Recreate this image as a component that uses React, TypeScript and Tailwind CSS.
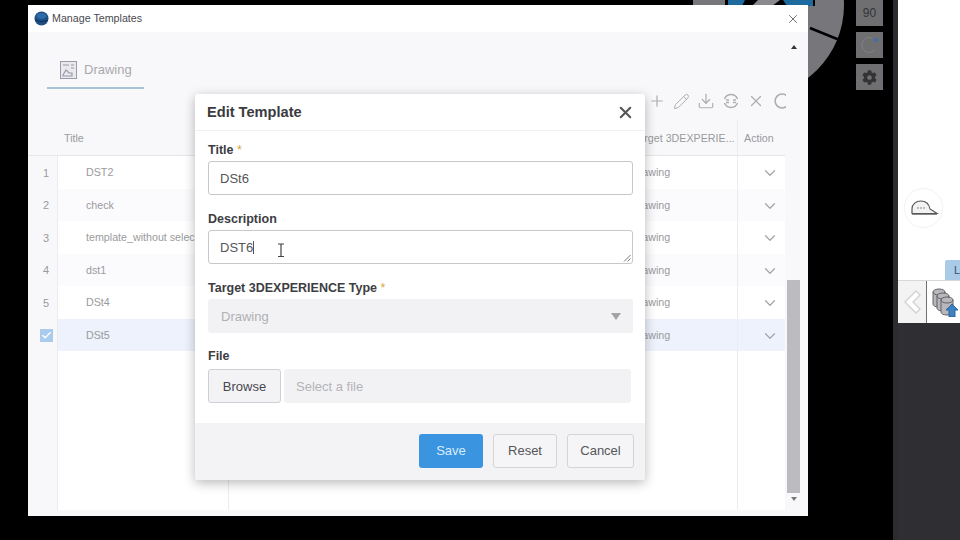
import { ChevronDown, Check, Plus, Pencil, Download, X } from "lucide-react";
import { FaCog } from "react-icons/fa";

const ROWS = ["DST2", "check", "template_without selection", "dst1", "DSt4", "DSt5"];

const Wheel = () => (
  <svg className="absolute left-[690px] top-0" width="170" height="100" viewBox="690 0 170 100">
    <circle cx="752" cy="5" r="92" fill="#77777b" />
    <path d="M690 0h3v8h-3z" fill="#000" />
    <path d="M725 0h90v6h-90z" fill="#000" />
    <path d="M728 0h17l-3 6h-14z" fill="#1d6a9e" />
    <path d="M758 0h22l-8 6h-20z" fill="#8a8a8e" />
    <path d="M783 0h30v6h-26z" fill="#1d6a9e" />
    <path d="M808 6h8v3h-8z" fill="#77777b" />
    <path d="M810 28L842 41" stroke="#000" strokeWidth="2.5" />
  </svg>
);

const SideButton = ({ children }: { children: React.ReactNode }) => (
  <div className="w-[27px] h-[26px] bg-[#6f6f71] flex items-center justify-center text-[#333335] text-[12px]">
    {children}
  </div>
);

const Toolbar = () => (
  <div className="absolute right-[1px] top-[-13px] w-[138px] h-[26px] flex items-center gap-[7px] overflow-hidden text-[#aeaeb2]">
    <Plus size={18} strokeWidth={1.6} className="flex-none" />
    <Pencil size={17} strokeWidth={1.4} className="flex-none" />
    <Download size={18} strokeWidth={1.6} className="flex-none" />
    <svg width="18" height="18" viewBox="0 0 18 18" fill="none" stroke="currentColor" strokeWidth="1.5" className="flex-none">
      <path d="M2.5 7a7 7 0 0 1 13 0M15.5 11a7 7 0 0 1-13 0" />
      <path d="M4 8h3M11 8h3M4 10.5h3M11 10.5h3" />
    </svg>
    <X size={18} strokeWidth={1.6} className="flex-none" />
    <svg width="18" height="18" viewBox="0 0 18 18" fill="none" stroke="currentColor" strokeWidth="1.6" className="flex-none">
      <path d="M15 4a7 7 0 1 0 0 10" />
    </svg>
  </div>
);

const Grid = () => (
  <div className="flex-1 flex flex-col min-h-0 mr-[2px] text-[10.7px] text-[#9a9a9d]">
    <div className="flex h-[36px] items-center border-b border-[#e6e6ea]">
      <div className="w-[29px]" />
      <div className="w-[172px] pl-[7px] pt-[2px] h-full flex items-center">Title</div>
      <div className="flex-1" />
      <div className="w-[112px] pl-[8px] pt-[2px] whitespace-nowrap h-full flex items-center">Target 3DEXPERIE...</div>
      <div className="w-[48px] pl-[6px] pt-[2px] h-full flex items-center border-l border-[#ececf0]">Action</div>
    </div>
    <div className="relative flex-1 flex flex-col">
      {ROWS.map((title, i) => (
        <div key={title} className={`flex h-[32.5px] flex-none ${i === 5 ? "bg-[#edf2fc]" : i % 2 === 1 ? "bg-[#fbfbfd]" : "bg-white"}`}>
          <div className="w-[29px] bg-[#f8f8fa] flex items-center justify-center pl-[7px] pt-[1px] text-[11px]">
            {i === 5 ? (
              <span className="w-[13px] h-[13px] bg-[#a9cbee] flex items-center justify-center text-white">
                <Check size={11} strokeWidth={3} />
              </span>
            ) : (
              i + 1
            )}
          </div>
          <div className="w-[172px] pl-[28px] flex items-center whitespace-nowrap overflow-hidden border-l border-[#ececf0]">{title}</div>
          <div className="flex-1" />
          <div className="w-[112px] flex items-center pl-[6px]">Drawing</div>
          <div className="w-[48px] flex items-center justify-center pt-[2px] border-l border-[#ececf0] text-[#a4a4a8]">
            <ChevronDown size={18} strokeWidth={1.6} className="ml-[17px]" />
          </div>
        </div>
      ))}
      <div className="flex-1 flex bg-white">
        <div className="w-[29px] bg-[#f8f8fa]" />
        <div className="w-[172px] border-l border-r border-[#ececf0]" />
        <div className="flex-1" />
        <div className="w-[48px] border-l border-[#ececf0]" />
      </div>
    </div>
  </div>
);

const Scrollbar = () => (
  <div className="w-[13px] mr-[8px] flex flex-col items-center">
    <div className="h-[22px] flex items-center justify-center pt-[7px]">
      <span className="w-0 h-0 border-x-[3.5px] border-x-transparent border-b-[4px] border-b-[#333]" />
    </div>
    <div className="flex-1" />
    <div className="w-full h-[213px] bg-[#bcbcc0]" />
    <div className="h-[23px] flex justify-center pt-[4px]">
      <span className="w-0 h-0 border-x-[3.5px] border-x-transparent border-t-[4px] border-t-[#77777b]" />
    </div>
  </div>
);

const inputCls = "w-full h-[34px] rounded-[3px] border border-[#c8c8cc] bg-white px-[11px] pt-[1px] flex items-center text-[13px] text-[#55555a]";

const Label = ({ text, req }: { text: string; req?: boolean }) => (
  <div className="h-[22px] leading-[22px] font-bold text-[12.5px] text-[#3d3d42]">
    {text}
    {req && <span className="text-[#d9a441] font-normal"> *</span>}
  </div>
);

const EditDialog = () => (
  <div className="absolute left-[195px] top-[94px] w-[450px] h-[386px] bg-white rounded-[3px] shadow-[0_3px_12px_rgba(0,0,0,0.28)] flex flex-col">
    <div className="h-[37px] flex-none border-b border-[#f0f0f3] pl-[12px] pr-[10px] flex items-center justify-between">
      <span className="font-bold text-[14.6px] text-[#3a3a3f] mt-[1px]">Edit Template</span>
      <X size={19} strokeWidth={2.6} className="text-[#55555a]" />
    </div>
    <div className="flex-1 pl-[13px] pr-[12px] pt-[8px]">
      <Label text="Title" req />
      <div className={inputCls}>DSt6</div>
      <div className="mt-[13px]"><Label text="Description" /></div>
      <div className={`${inputCls} relative border-[#b4b4b8]`}>
        DST6
        <span className="w-px h-[13px] bg-[#55555a]" />
        {/* mouse cursor */}
        <svg className="absolute left-[67px] top-[12px]" width="10" height="15" viewBox="0 0 10 15" fill="none" stroke="#444" strokeWidth="1.2">
          <path d="M2 1h6M2 13.5h6M5 1v12.5" />
        </svg>
        <svg className="absolute right-[1px] bottom-[1px]" width="8" height="8" viewBox="0 0 8 8" stroke="#77777b" strokeWidth="1">
          <path d="M1 7.5L7.5 1M4.5 7.5L7.5 4.5" />
        </svg>
      </div>
      <div className="mt-[13px]"><Label text="Target 3DEXPERIENCE Type" req /></div>
      <div className="w-full h-[34px] rounded-[3px] bg-[#f2f2f4] pl-[13px] pr-[12px] pt-[1px] flex items-center justify-between text-[13px] text-[#b0b0b4]">
        Drawing
        <span className="w-0 h-0 border-x-[5.5px] border-x-transparent border-t-[7px] border-t-[#a3a3a7]" />
      </div>
      <div className="mt-[12px]"><Label text="File" /></div>
      <div className="flex gap-[3px] pr-[2px] mt-[2px]">
        <div className="w-[73px] h-[34px] rounded-[3px] border border-[#d0d0d4] bg-[#f3f3f5] pt-[1px] flex items-center justify-center text-[13px] text-[#48484d]">Browse</div>
        <div className="flex-1 h-[34px] rounded-[3px] bg-[#f2f2f4] pl-[12px] pt-[1px] flex items-center text-[13px] text-[#b4b4b8]">Select a file</div>
      </div>
    </div>
    <div className="h-[57px] flex-none bg-[#f3f3f5] rounded-b-[3px] flex items-center justify-end gap-[10px] pr-[11px] pb-[2px] text-[13px]">
      <div className="w-[64px] h-[34px] rounded-[3px] bg-[#3a94e0] text-[#d8ecfb] flex items-center justify-center">Save</div>
      <div className="w-[64px] h-[34px] rounded-[3px] border border-[#d4d4d8] bg-[#f5f5f7] text-[#55555a] flex items-center justify-center">Reset</div>
      <div className="w-[67px] h-[34px] rounded-[3px] border border-[#d4d4d8] bg-[#f5f5f7] text-[#55555a] flex items-center justify-center">Cancel</div>
    </div>
  </div>
);

const ManageWindow = () => (
  <div className="absolute left-[28px] top-[5px] w-[780px] h-[511px] bg-[#f8f8fa] flex flex-col">
    <div className="h-[27px] flex-none bg-white flex items-center pl-[6px] pr-[8px] gap-[3px]">
      <svg width="15" height="15" viewBox="0 0 15 15">
        <circle cx="7.5" cy="7.5" r="7" fill="#1f4f82" />
        <ellipse cx="7.5" cy="5" rx="5" ry="3" fill="#2c6ca8" />
        <path d="M1 9c4 2 9 2 13 0" stroke="#0f2f55" fill="none" />
      </svg>
      <span className="flex-1 text-[10.7px] text-[#4a4a4f]">Manage Templates</span>
      <X size={14} strokeWidth={1.6} className="text-[#66666a]" />
    </div>
    <div className="flex-1 flex min-h-0">
      <div className="flex-1 flex flex-col min-w-0">
        <div className="h-[57px] flex-none pl-[19px] pt-[6px]">
          <div className="w-[97px] h-[51px] border-b-[2px] border-[#a6c4d8] pt-[14px] flex items-center gap-[7px] pl-[13px] text-[#a9a9ad] text-[13px]">
            <svg width="17" height="18" viewBox="0 0 17 18" fill="none" stroke="#9a9aa8" strokeWidth="1">
              <rect x=".5" y=".5" width="16" height="17" fill="#e9e9ee" />
              <path d="M3 4h6M11 4h3M11 7h3M3 14l3-5 3 3h3v3H3z" strokeWidth="1.2" />
            </svg>
            Drawing
          </div>
        </div>
        <div className="relative h-[31px] flex-none"><div className="absolute right-0 top-[12px] w-0"><Toolbar /></div></div>
        <Grid />
        <div className="h-[6px] flex-none" />
      </div>
      <Scrollbar />
    </div>
  </div>
);

export default function App() {
  return (
    <div className="relative w-[960px] h-[540px] overflow-hidden bg-black font-['Liberation_Sans',Arial,sans-serif]">
      <Wheel />
      <div className="absolute left-[856px] top-0 flex flex-col gap-[6px]">
        <SideButton>90</SideButton>
        <SideButton>
          <svg width="20" height="20" viewBox="0 0 20 20" fill="none">
            <path d="M15 15a7.5 7.5 0 1 1-3-12" stroke="#828286" strokeWidth="1" />
            <circle cx="16" cy="5" r="2" fill="#3c6fb0" />
          </svg>
        </SideButton>
        <SideButton><FaCog size={15} /></SideButton>
      </div>
      {/* right side app behind */}
      <div className="absolute left-[893px] top-0 w-[67px] h-[540px] flex">
        <div className="w-[5px] bg-[#2c2c30]" />
        <div className="flex-1 flex flex-col">
          <div className="h-[280px] flex-none bg-white relative">
            <div className="absolute left-[6px] top-[188px] w-[39px] h-[40px] rounded-full border border-[#f2f2f2] flex items-center justify-center">
              <svg width="30" height="18" viewBox="0 0 30 18">
                <path d="M3 14V10c0-5 4-8 9-8s8 3 9 8l7 4.5H3z" fill="#f2f2f2" stroke="#58585c" strokeWidth="1.2" />
                <path d="M3 15h25" stroke="#58585c" strokeWidth="1.4" />
                <path d="M8 9h9" stroke="#8a8a8e" strokeDasharray="2 1" />
              </svg>
            </div>
            <div className="absolute right-0 bottom-0 w-[15px] h-[20px] bg-[#a9cbe8] rounded-tl-[2px] pl-[9px] text-[11px] leading-[20px] text-[#38506a]">L</div>
          </div>
          <div className="h-[43px] flex-none flex bg-white border-t border-[#d8d8d8]">
            <div className="w-[29px] bg-[#f3f3f3] border-r border-[#707074] flex items-center justify-center">
              <svg width="20" height="26" viewBox="0 0 20 26" fill="#fff" stroke="#d2d2d4" strokeWidth="1.4">
                <path d="M14 2l4 4-7 7 7 7-4 4L3 13z" />
              </svg>
            </div>
            <div className="flex-1 flex items-center pl-[5px]">
              <svg width="26" height="30" viewBox="0 0 26 30" fill="#b8b8bc" stroke="#55555a" strokeWidth="0.9">
                <path d="M1 5v12c0 2 3 3 6 3s6-1 6-3V5z" />
                <ellipse cx="7" cy="5" rx="6" ry="3" />
                <path d="M5 9v12c0 2 3 3 6 3s6-1 6-3V9z" />
                <ellipse cx="11" cy="9" rx="6" ry="3" />
                <path d="M9 13v12c0 2 3 3 6 3s6-1 6-3V13z" />
                <ellipse cx="15" cy="13" rx="6" ry="3" />
                <path d="M20 17l6 6h-3v7h-6v-7h-3z" fill="#3c83c4" stroke="#2a5f92" />
              </svg>
            </div>
          </div>
          <div className="flex-1 bg-[#2f2f33]" />
        </div>
      </div>
      <ManageWindow />
      <EditDialog />
    </div>
  );
}
